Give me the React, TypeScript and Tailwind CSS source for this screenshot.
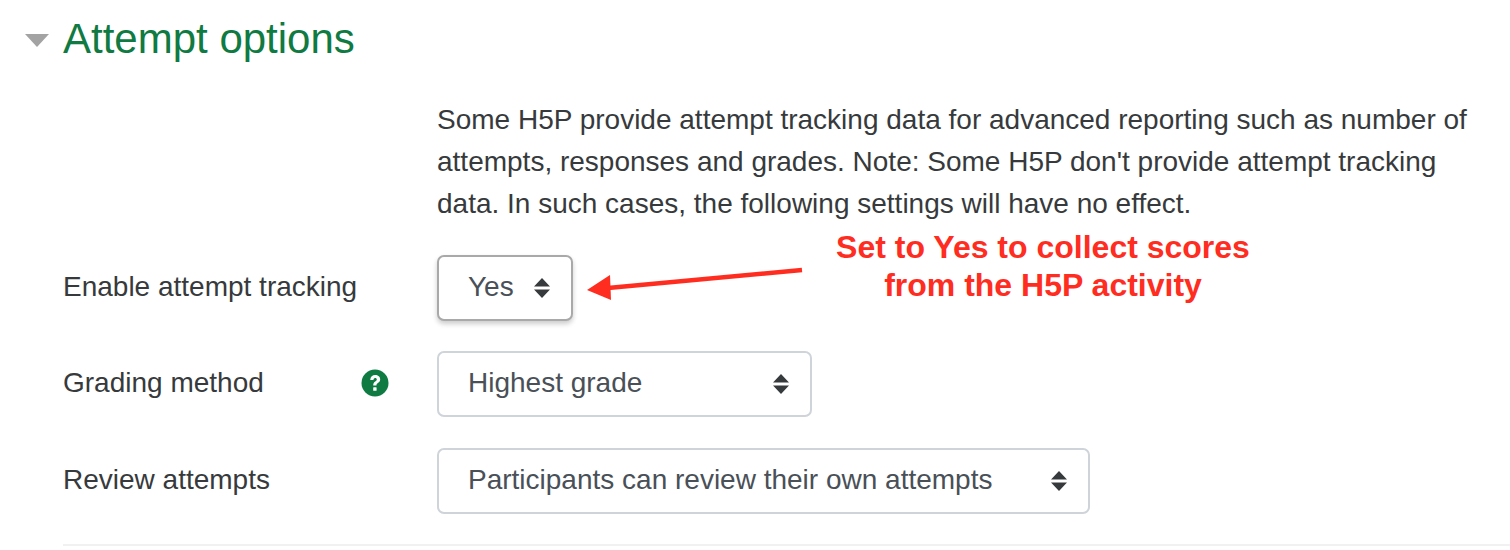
const font = "font-['Liberation_Sans',Arial,sans-serif]";

function Updown() {
  return (
    <svg width="16" height="20" viewBox="0 0 16 20" className="shrink-0">
      <path d="M8 0 L16 8.6 H0 Z M0 11.4 H16 L8 20 Z" fill="#373a3c" />
    </svg>
  );
}

function Select({ label, width, focused }: { label: string; width: string; focused?: boolean }) {
  return (
    <div
      className={`${width} h-[66px] flex items-center justify-between pl-[29px] pr-[21px] rounded-[7px] bg-white text-[28px] text-[#495057] border-2 ${
        focused ? "border-[#a9a9a9] shadow-[0_3px_5px_rgba(0,0,0,0.2)]" : "border-[#ced4da]"
      }`}
    >
      <span className="pb-[2px]">{label}</span>
      <Updown />
    </div>
  );
}

function Row({ label, help, children, className }: { label: string; help?: boolean; children: React.ReactNode; className?: string }) {
  return (
    <div className={`flex items-center ${className ?? ""}`}>
      <div className="w-[374px] flex items-center justify-between pr-[48px] pb-[2px] text-[28px] text-[#373a3c]">
        <span>{label}</span>
        {help && (
          <svg width="28" height="28" viewBox="0 0 28 28" className="shrink-0">
            <circle cx="14" cy="14" r="13.5" fill="#0f7a42" />
            <path d="M9.2 11 C9.4 7.8 11.4 6 14.2 6 C17 6 19.2 7.8 19.2 10.3 C19.2 12.4 18 13.4 16.6 14.3 C15.6 15 15.5 15.5 15.5 16.6 H12.2 C12.2 14.6 12.7 13.6 14.2 12.6 C15.3 11.9 15.8 11.4 15.8 10.5 C15.8 9.5 15.1 9 14.2 9 C13.2 9 12.6 9.7 12.4 11 Z" fill="#fff" />
            <rect x="12.2" y="18.2" width="3.4" height="3.6" rx="0.6" fill="#fff" />
          </svg>
        )}
      </div>
      {children}
    </div>
  );
}

export default function App() {
  return (
    <div className={`${font} relative w-[1510px] h-[550px] overflow-hidden bg-white`}>
      <div className="flex items-center pl-[25px] pt-[15px] h-[52px] translate-y-[5px]">
        <svg width="24" height="13" viewBox="0 0 24 13" className="mr-[14px] mt-[4px]">
          <path d="M0 0 H24 L12 13 Z" fill="#a3a3a3" />
        </svg>
        <h2 className="text-[42px] leading-[48px] text-[#0f7a42] font-normal">Attempt options</h2>
      </div>
      <div className="pl-[63px]">
        <p className="ml-[374px] mt-[47px] w-[1050px] text-[28px] leading-[42px] text-[#373a3c]">
          Some H5P provide attempt tracking data for advanced reporting such as number of attempts, responses and grades. Note: Some H5P don't provide attempt tracking data. In such cases, the following settings will have no effect.
        </p>
        <Row label="Enable attempt tracking" className="mt-[30px]">
          <Select label="Yes" width="w-[136px]" focused />
        </Row>
        <Row label="Grading method" help className="mt-[30px]">
          <Select label="Highest grade" width="w-[375px]" />
        </Row>
        <Row label="Review attempts" className="mt-[31px]">
          <Select label="Participants can review their own attempts" width="w-[653px]" />
        </Row>
        <div className="mt-[30px] h-[2px] bg-[#f1f1f1] w-[1447px]" />
      </div>

      <svg width="220" height="40" viewBox="0 0 220 40" className="absolute left-[586px] top-[265px]">
        <path d="M216 5 L22 23" stroke="#ff2d1f" strokeWidth="4.5" fill="none" />
        <path d="M1 25 L24 10 L25 35 Z" fill="#ff2d1f" />
      </svg>
      <div className="absolute left-[786px] top-[228px] w-[514px] text-center text-[32px] leading-[38px] font-bold text-[#ff2d1f]">
        Set to Yes to collect scores
        <br />
        from the H5P activity
      </div>
    </div>
  );
}
